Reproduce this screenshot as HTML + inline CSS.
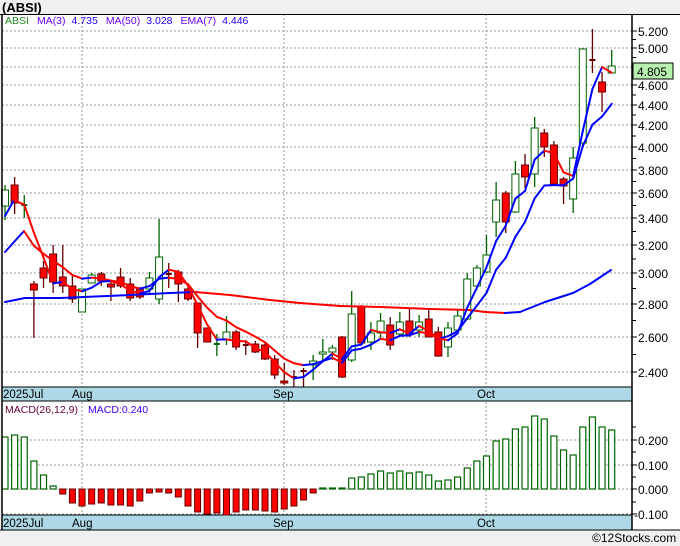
<!DOCTYPE html>
<html><head><meta charset="utf-8"><style>
html,body{margin:0;padding:0;background:#f0f0f0;width:680px;height:546px;overflow:hidden}
svg{display:block}
text{font-family:"Liberation Sans","DejaVu Sans",sans-serif}
</style></head><body>
<svg id="s" width="680" height="546" xmlns="http://www.w3.org/2000/svg"></svg>
<script>
var o=[];
function A(s){o.push(s);}
A('<rect x="0" y="0" width="680" height="546" fill="#f0f0f0"/>');
A('<text x="2" y="12" font-size="13" font-weight="bold" fill="#000">(ABSI)</text>');
A('<rect x="1" y="14" width="679" height="516" fill="#fff"/>');
var py=[[5.2,31],[5.0,48],[4.8,67],[4.6,85],[4.4,105],[4.2,125],[4.0,147],[3.8,170],[3.6,193],[3.4,218],[3.2,245],[3.0,273],[2.8,304],[2.6,337],[2.4,372]];
py.forEach(function(p){A('<line x1="2" x2="632" y1="'+p[1]+'" y2="'+p[1]+'" stroke="#999" stroke-dasharray="2,2"/>');
A('<line x1="632" x2="637" y1="'+p[1]+'" y2="'+p[1]+'" stroke="#000"/>');
A('<text x="638" y="'+(p[1]+5)+'" font-size="12" fill="#000">'+p[0].toFixed(3)+'</text>');});
for(var i=0;i<py.length-1;i++){var m=(py[i][1]+py[i+1][1])/2;A('<line x1="632" x2="636" y1="'+m+'" y2="'+m+'" stroke="#000"/>');}
var my=[["0.200",440],["0.100",465],["0.000",489],["-0.100",514]];
my.forEach(function(p){A('<line x1="2" x2="632" y1="'+p[1]+'" y2="'+p[1]+'" stroke="#999" stroke-dasharray="2,2"/>');
A('<line x1="632" x2="637" y1="'+p[1]+'" y2="'+p[1]+'" stroke="#000"/>');
A('<text x="'+(p[0][0]=="-"?634:638)+'" y="'+(p[1]+5)+'" font-size="12" fill="#000">'+p[0]+'</text>');});
[427,452,477,502].forEach(function(y){A('<line x1="632" x2="636" y1="'+y+'" y2="'+y+'" stroke="#000"/>');});
[82,284,486].forEach(function(x){A('<line x1="'+x+'" x2="'+x+'" y1="14" y2="530" stroke="#999" stroke-dasharray="2,2"/>');});
var c=[[190,206,185,220,1],[185,203,177,214,0],[205,205,195,218,2],[284,290,281,338,0],[268,278,261,288,0],[254,282,245,293,0],[277,286,245,293,0],[286,299,275,303,0],[312,289,289,312,1],[283,275,273,283,1],[274,281,272,286,0],[284,287,280,301,0],[277,286,268,288,0],[284,298,278,301,0],[289,297,287,299,0],[289,278,272,295,1],[299,257,219,304,1],[274,274,263,288,3],[272,284,270,302,0],[289,299,287,301,0],[303,333,303,348,0],[328,342,328,342,0],[344,344,334,356,2],[340,332,316,345,1],[332,347,330,350,0],[345,345,340,355,3],[344,352,341,353,0],[345,359,343,360,0],[359,375,355,379,0],[381,383,363,385,0],[377,377,370,387,3],[371,371,368,387,3],[365,361,355,380,1],[354,352,339,362,1],[352,348,345,360,1],[337,377,336,378,0],[360,314,291,362,1],[307,343,305,345,0],[342,333,322,350,1],[333,321,313,340,1],[325,345,317,350,0],[334,322,312,337,1],[321,334,308,337,0],[330,322,315,337,1],[319,337,308,337,0],[332,356,327,357,0],[347,328,322,357,1],[330,316,310,332,1],[319,279,273,320,1],[286,268,265,290,1],[272,255,235,273,1],[222,200,182,237,1],[193,222,191,233,0],[212,174,161,213,1],[165,177,154,188,0],[174,128,117,187,1],[133,147,129,157,0],[145,184,141,186,0],[179,186,177,204,0],[199,158,147,213,1],[143,49,49,145,1],[60,60,29,73,3],[82,92,72,112,0],[73,66,50,73,1]];
var X=function(i){return 5+9.63*i;};
var closes=[];
c.forEach(function(d,i){var x=X(i),g=d[4];closes.push(d[1]);
var col=(g==1||g==2)?"#006400":"#660000";
A('<line x1="'+x+'" x2="'+x+'" y1="'+d[2]+'" y2="'+d[3]+'" stroke="'+col+'" stroke-width="1.3"/>');
if(g==2||g==3){A('<line x1="'+(x-3)+'" x2="'+(x+3)+'" y1="'+d[0]+'" y2="'+d[0]+'" stroke="'+col+'" stroke-width="2"/>');}
else{var t=Math.min(d[0],d[1]),h=Math.max(Math.abs(d[1]-d[0]),2);
A('<rect x="'+(x-3.5)+'" y="'+t+'" width="7" height="'+h+'" fill="'+(g==1?"#fff":"#f00")+'" stroke="'+col+'"/>');}});
function seg(pts,w){for(var i=1;i<pts.length;i++){var a=pts[i-1],b=pts[i];var col=b[1]>a[1]+0.3?"#ff0000":"#0000ff";
A('<line x1="'+a[0]+'" y1="'+a[1]+'" x2="'+b[0]+'" y2="'+b[1]+'" stroke="'+col+'" stroke-width="'+w+'" stroke-linecap="round"/>');}}
var m3=[[5,216],[14,200]],e7=[[5,252],[14,242],[24,231]],e=231;
for(var i=0;i<closes.length;i++){if(i>2){e=e+(closes[i]-e)*0.25;e7.push([X(i),e]);}
if(i>=2)m3.push([X(i),(closes[i]+closes[i-1]+closes[i-2])/3]);}
seg([[5,302],[25,298],[60,298],[130,295],[170,293],[195,292],[230,295],[270,300],[300,303],[340,306],[380,307],[430,309],[470,310],[485,312],[505,313],[520,312],[545,302],[573,293],[590,284],[611,270]],2);
seg(e7,2);seg(m3,2);
A('<rect x="2" y="387" width="630" height="14" fill="#add8e6" stroke="#000"/>');
A('<rect x="2" y="515" width="630" height="15" fill="#add8e6" stroke="#000"/>');
[[3,"2025Jul"],[72,"Aug"],[273,"Sep"],[477,"Oct"]].forEach(function(l){A('<text x="'+l[0]+'" y="398" font-size="11.5" fill="#000">'+l[1]+'</text>');A('<text x="'+l[0]+'" y="527" font-size="11.5" fill="#000">'+l[1]+'</text>');});
var mv=[52,54,52,28,14,3,-5,-14,-17,-15,-14,-16,-16,-17,-12,-4,-3,-4,-8,-17,-23,-25,-24,-26,-23,-21,-21,-22,-23,-20,-17,-11,-4,1,1,1,11,12,15,18,16,18,16,17,14,8,9,12,21,28,33,48,50,60,62,73,70,53,39,34,62,72,62,59];
mv.forEach(function(v,i){var x=X(i)-3;if(v>0){A('<rect x="'+x+'" y="'+(489-v)+'" width="6" height="'+v+'" fill="#fff" stroke="#006400" stroke-width="1.2"/>');}
else{A('<rect x="'+x+'" y="489" width="6" height="'+(-v)+'" fill="#f00" stroke="#660000"/>');}});
A('<line x1="2" x2="2" y1="14" y2="530" stroke="#000" stroke-width="1.5"/>');
A('<line x1="632" x2="632" y1="14" y2="530" stroke="#000" stroke-width="1.5"/>');
A('<line x1="0" x2="680" y1="14.5" y2="14.5" stroke="#000"/>');
A('<line x1="0" x2="680" y1="530" y2="530" stroke="#000"/>');
A('<rect x="633" y="63" width="40" height="16" fill="#b8f0b0" stroke="#000"/>');
A('<text x="637" y="76" font-size="12" fill="#000">4.805</text>');
A('<text x="5" y="24" font-size="10.5"><tspan fill="#228b22">ABSI</tspan><tspan fill="#6a00ff" dx="8">MA(3)</tspan><tspan fill="#2200ff" dx="6">4.735</tspan><tspan fill="#6a00ff" dx="8">MA(50)</tspan><tspan fill="#2200ff" dx="6">3.028</tspan><tspan fill="#6a00ff" dx="8">EMA(7)</tspan><tspan fill="#2200ff" dx="6">4.446</tspan></text>');
A('<text x="5" y="413" font-size="10.5" fill="#660033">MACD(26,12,9)</text>');
A('<text x="88" y="413" font-size="10.5" fill="#4400ff">MACD:0.240</text>');
A('<text x="592" y="542" font-size="12" fill="#000">©12Stocks.com</text>');
document.getElementById("s").innerHTML=o.join("");
</script>
</body></html>
